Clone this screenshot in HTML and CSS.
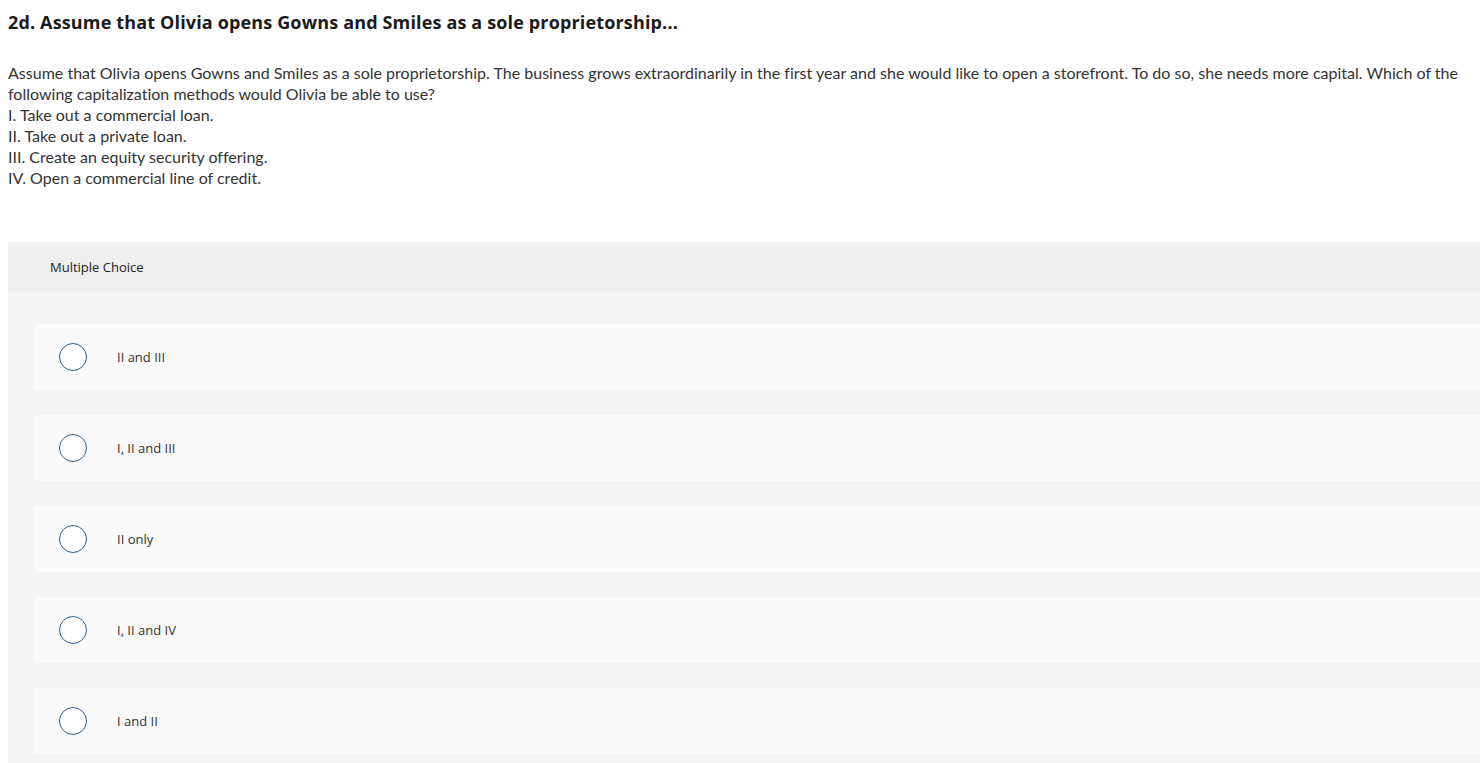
FILE: index.html
```html
<!DOCTYPE html>
<html>
<head>
<meta charset="utf-8">
<link rel="stylesheet" href="styles.css">
</head>
<body>
<h1 class="title">2d. Assume that Olivia opens Gowns and Smiles as a sole proprietorship...</h1>
<div class="prompt">
<p>Assume that Olivia opens Gowns and Smiles as a sole proprietorship. The business grows extraordinarily in the first year and she would like to open a storefront. To do so, she needs more capital. Which of the following capitalization methods would Olivia be able to use?</p>
<p>I. Take out a commercial loan.</p>
<p>II. Take out a private loan.</p>
<p>III. Create an equity security offering.</p>
<p>IV. Open a commercial line of credit.</p>
</div>
<section class="panel">
<div class="panel-head">Multiple Choice</div>
<div class="choices">
<label class="choice"><span class="radio"></span><span class="choice-text">II and III</span></label>
<label class="choice"><span class="radio"></span><span class="choice-text">I, II and III</span></label>
<label class="choice"><span class="radio"></span><span class="choice-text">II only</span></label>
<label class="choice"><span class="radio"></span><span class="choice-text">I, II and IV</span></label>
<label class="choice"><span class="radio"></span><span class="choice-text">I and II</span></label>
</div>
</section>
</body>
</html>
```

FILE: styles.css
```css
html, body {
  margin: 0;
  padding: 0;
  background: #ffffff;
  overflow: hidden;
}
body {
  padding: 0 0 0 8px;
  font-family: "Open Sans", "Lato", sans-serif;
  color: #333333;
}
.title {
  margin: 0;
  padding-top: 12px;
  font-family: "Open Sans", sans-serif;
  font-size: 18px;
  line-height: 20px;
  font-weight: 700;
  letter-spacing: 0.15px;
  color: #1a1a1a;
}
.prompt {
  margin-top: 30px;
  font-family: "Lato", "Open Sans", sans-serif;
  font-size: 16px;
  letter-spacing: 0.01px;
  line-height: 21px;
  color: #333333;
}
.prompt p {
  margin: 0;
}
.panel {
  margin-top: 54px;
  margin-right: -40px;
  background: #f4f4f4;
}
.panel-head {
  height: 50px;
  display: flex;
  align-items: center;
  padding-left: 42px;
  background: #efefef;
  font-size: 13px;
  color: #222222;
}
.choices {
  display: flex;
  flex-direction: column;
  gap: 25px;
  padding: 32px 0 10px 26px;
}
.choice {
  display: flex;
  align-items: center;
  height: 66px;
  background: #fafafa;
  border-radius: 3px;
  padding-left: 25px;
}
.radio {
  box-sizing: border-box;
  width: 28px;
  height: 28px;
  border: 1.5px solid #2b5f90;
  border-radius: 50%;
  background: #ffffff;
  flex: none;
}
.choice-text {
  margin-left: 30px;
  font-size: 13px;
  color: #333333;
}
```
